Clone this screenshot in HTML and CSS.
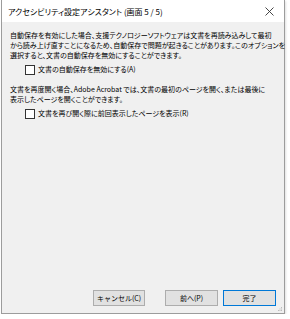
FILE: index.html
```html
<!DOCTYPE html>
<html lang="ja">
<head>
    <meta charset="UTF-8">
    <title>アクセシビリティ設定アシスタント</title>
    <link rel="stylesheet" href="styles.css">
</head>
<body>
    <div class="window">
        <div class="titlebar">
            <span class="title">アクセシビリティ設定アシスタント (画面 5 / 5)</span>
            <svg class="close" width="9" height="9" viewBox="0 0 9 9">
                <path d="M0.5 0.5 L8.5 8.5 M8.5 0.5 L0.5 8.5" stroke="#333" stroke-width="0.9" fill="none"/>
            </svg>
        </div>
        <div class="content">
            <p class="text">自動保存を有効にした場合、支援テクノロジーソフトウェアは文書を再読み込みして最初<br>から読み上げ直すことになるため、自動保存で問題が起きることがあります。このオプションを<br>選択すると、文書の自動保存を無効にすることができます。</p>
            <label class="check"><span class="box"></span>文書の自動保存を無効にする(A)</label>

            <p class="text second">文書を再度開く場合、Adobe Acrobat では、文書の最初のページを開く、または最後に<br>表示したページを開くことができます。</p>
            <label class="check"><span class="box"></span>文書を再び開く際に前回表示したページを表示(R)</label>

            <div class="buttons">
                <button class="btn cancel">キャンセル(C)</button>
                <button class="btn">前へ(P)</button>
                <button class="btn default">完了</button>
            </div>
            <svg class="grip" width="5" height="5" viewBox="0 0 5 5">
                <rect x="3" y="0" width="1" height="1" fill="#bbb"/>
                <rect x="1.5" y="1.5" width="1" height="1" fill="#bbb"/>
                <rect x="3" y="1.5" width="1" height="1" fill="#bbb"/>
                <rect x="0" y="3" width="1" height="1" fill="#bbb"/>
                <rect x="1.5" y="3" width="1" height="1" fill="#bbb"/>
                <rect x="3" y="3" width="1" height="1" fill="#bbb"/>
            </svg>
        </div>
    </div>
</body>
</html>
```

FILE: styles.css
```css
body {
    margin: 0;
    background: #ffffff;
    font-family: "Noto Sans CJK JP", "Noto Sans", sans-serif;
    font-feature-settings: "palt";
    color: #000;
}

.window {
    width: 282px;
    height: 313px;
    margin-left: 1px;
    border: 1px solid #9c9c9c;
    border-top: none;
    box-shadow: 1px 1px 2px rgba(0,0,0,0.12);
    display: flex;
    flex-direction: column;
}

.titlebar {
    height: 22px;
    background: #ffffff;
    display: flex;
    align-items: center;
    justify-content: space-between;
    padding: 0 8px 0 6px;
}

.title {
    font-size: 8px;
    color: #000;
}

.close {
    margin-right: 2px;
}

.content {
    flex: 1;
    background: #f0f0f0;
    padding: 8px 8px 7px 8px;
    display: flex;
    flex-direction: column;
    position: relative;
}

.text {
    margin: 0;
    font-size: 7px;
    line-height: 10px;
    white-space: nowrap;
}

.text.second {
    margin-top: 9px;
}

.check {
    display: flex;
    align-items: center;
    gap: 3px;
    margin: 4px 0 0 15px;
    font-size: 7px;
    line-height: 11px;
}

.box {
    width: 8px;
    height: 8px;
    border: 1px solid #333;
    background: #fff;
}

.buttons {
    margin-top: auto;
    display: flex;
    justify-content: flex-end;
    gap: 5px;
}

.btn {
    width: 53px;
    height: 16px;
    padding: 0;
    background: #e1e1e1;
    border: 1px solid #adadad;
    font-family: inherit;
    font-size: 7px;
    color: #000;
}

.btn.cancel {
    width: 52px;
    margin-right: 15px;
}

.btn.default {
    border-color: #0078d7;
}

.grip {
    position: absolute;
    right: 1px;
    bottom: 1px;
}
```
